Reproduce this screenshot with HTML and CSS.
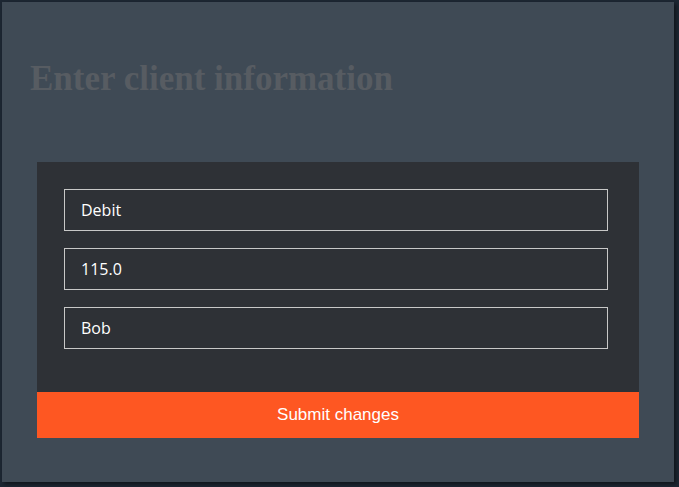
FILE: index.html
```html
<!DOCTYPE html>
<html>
<head>
<meta charset="utf-8">
<link rel="stylesheet" href="styles.css">
</head>
<body>
<div class="panel">
  <h1 class="title">Enter client information</h1>
  <form class="card">
    <div class="fields">
      <input class="field" type="text" value="Debit">
      <input class="field" type="text" value="115.0">
      <input class="field" type="text" value="Bob">
    </div>
    <button class="submit" type="button">Submit changes</button>
  </form>
</div>
</body>
</html>
```
FILE: styles.css
```css
html, body {
  margin: 0;
  padding: 0;
  background: #1d2733;
  width: 679px;
  height: 487px;
  overflow: hidden;
}
.panel {
  box-sizing: border-box;
  margin: 2px 0 0 2px;
  width: 672px;
  height: 480px;
  background: #3f4a55;
  box-shadow: 2px 2px 4px rgba(0,0,0,0.5);
  padding: 57px 0 0 0;
}
.title {
  margin: 0 0 64px 28px;
  font-family: "Liberation Serif", serif;
  font-weight: bold;
  font-size: 35px;
  line-height: 39px;
  color: #575c62;
}
.card {
  margin: 0 0 0 35px;
  width: 602px;
  background: #2e3136;
  display: flex;
  flex-direction: column;
}
.fields {
  display: flex;
  flex-direction: column;
  gap: 17px;
  padding: 27px 31px 43px 27px;
}
.field {
  box-sizing: border-box;
  width: 544px;
  height: 42px;
  margin: 0;
  background: transparent;
  border: 1px solid #c8c8c8;
  padding: 0 16px;
  font-family: "Open Sans", sans-serif;
  font-size: 16px;
  color: #ffffff;
  outline: none;
}
.submit {
  height: 46px;
  border: none;
  margin: 0;
  background: #fe5722;
  color: #ffffff;
  font-family: "Liberation Sans", Arial, sans-serif;
  font-size: 17px;
}
```
